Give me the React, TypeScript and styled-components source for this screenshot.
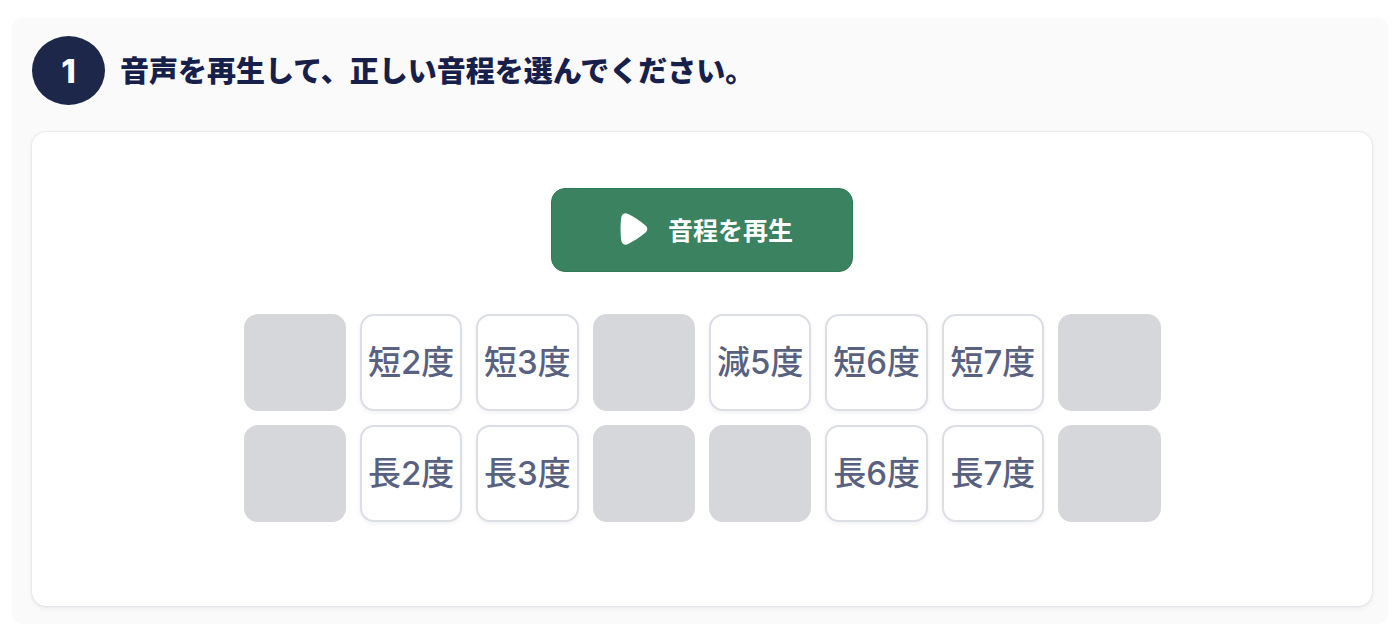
import React from "react";
import styled, { createGlobalStyle } from "styled-components";

const GlobalStyle = createGlobalStyle`
  *, *::before, *::after {
    box-sizing: border-box;
  }
  body {
    margin: 0;
    background: #ffffff;
    font-family: Inter, "Noto Sans CJK JP", sans-serif;
  }
`;

const Page = styled.main`
  padding: 18px 12px;
`;

const Question = styled.section`
  padding: 18px 16px 18px 20px;
  border-radius: 10px;
  background: #fafafa;
`;

const Header = styled.header`
  display: flex;
  align-items: center;
  gap: 15px;
  margin-bottom: 27px;
`;

const StepNumber = styled.span`
  display: flex;
  flex: none;
  align-items: center;
  justify-content: center;
  width: 73px;
  height: 69px;
  border-radius: 50%;
  background: #1c2749;
  color: #ffffff;
  font-size: 33px;
  font-weight: 800;
  line-height: 40px;
`;

const Title = styled.h1`
  margin: 0;
  padding-bottom: 4px;
  color: #16204a;
  font-family: "Noto Sans CJK JP", sans-serif;
  font-size: 29px;
  font-weight: 900;
  line-height: 40px;
`;

const Card = styled.div`
  display: flex;
  flex-direction: column;
  align-items: center;
  gap: 42px;
  padding: 56px 20px 84px;
  border-radius: 14px;
  background: #ffffff;
  box-shadow: 0 0 2px rgba(28, 33, 73, 0.16), 0 2px 5px rgba(28, 33, 73, 0.08);
`;

const PlayButton = styled.button`
  display: flex;
  align-items: center;
  justify-content: center;
  gap: 20px;
  width: 302px;
  max-width: 100%;
  height: 84px;
  padding: 0 0 2px 9px;
  border: 1px solid #2f7b57;
  border-radius: 14px;
  background: #3a8260;
  color: #ffffff;
  font-family: "Noto Sans CJK JP", sans-serif;
  font-size: 25px;
  font-weight: 700;
  line-height: 36px;
  cursor: pointer;
`;

const Choices = styled.div`
  display: grid;
  grid-template-columns: repeat(8, minmax(0, 1fr));
  gap: 14px;
  width: 100%;
  max-width: 917px;
`;

const Choice = styled.button`
  display: flex;
  align-items: center;
  justify-content: center;
  height: 97px;
  padding: 0 0 2px;
  border: 2px solid #dcdee5;
  border-radius: 14px;
  background: #ffffff;
  box-shadow: 0 2px 4px rgba(28, 33, 73, 0.06);
  color: #596180;
  font-family: inherit;
  font-size: 33px;
  font-weight: 500;
  line-height: 48px;
  white-space: nowrap;
  cursor: pointer;
`;

const EmptyCell = styled.div`
  height: 97px;
  border-radius: 14px;
  background: #d6d7db;
`;

const PlayIcon = () => (
  <svg width="28" height="32" viewBox="0 0 28 32" aria-hidden="true">
    <path
      d="M1 6C1.3 1.3 4.3-1 8.2 1.1C14 4 20 7.7 25.2 12.2C28 14.6 28 17.4 25.2 19.8C20 24.3 14 28 8.2 30.9C4.3 33 1.3 30.7 1 26C.4 19.3.4 12.7 1 6Z"
      fill="#ffffff"
    />
  </svg>
);

const intervals: (string | null)[] = [
  null, "短2度", "短3度", null, "減5度", "短6度", "短7度", null,
  null, "長2度", "長3度", null, null, "長6度", "長7度", null,
];

export default function App() {
  return (
    <>
      <GlobalStyle />
      <Page lang="ja">
        <Question>
          <Header>
            <StepNumber>1</StepNumber>
            <Title>音声を再生して、正しい音程を選んでください。</Title>
          </Header>
          <Card>
            <PlayButton type="button">
              <PlayIcon />
              音程を再生
            </PlayButton>
            <Choices role="group" aria-label="音程">
              {intervals.map((name, index) =>
                name ? (
                  <Choice key={index} type="button">{name}</Choice>
                ) : (
                  <EmptyCell key={index} />
                )
              )}
            </Choices>
          </Card>
        </Question>
      </Page>
    </>
  );
}
